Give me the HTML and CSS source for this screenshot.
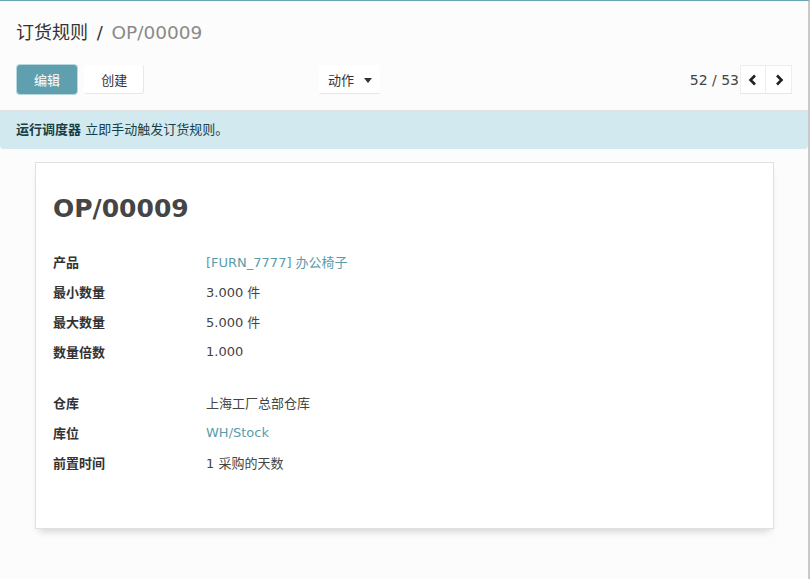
FILE: index.html
```html
<!DOCTYPE html>
<html lang="zh-CN">
<head>
    <meta charset="UTF-8">
    <title>订货规则 - OP/00009</title>
    <link rel="stylesheet" href="styles.css">
</head>
<body>

<div class="app">

    <!-- control panel -->
    <div class="cp">
        <div class="breadcrumb">
            <span class="bc-parent">订货规则</span>
            <span class="bc-sep">/</span>
            <span class="bc-current">OP/00009</span>
        </div>
        <div class="cp-bottom">
            <div class="cp-left">
                <div class="cp-buttons">
                    <button class="btn btn-primary">编辑</button>
                    <button class="btn btn-light">创建</button>
                </div>
                <div class="cp-sidebar">
                    <button class="btn btn-dropdown">动作 <span class="caret"></span></button>
                </div>
            </div>
            <div class="cp-right">
                <span class="pager-value">52 / 53</span>
                <div class="pager-btns">
                    <button class="btn btn-pager">
                        <svg width="10" height="12" viewBox="0 0 10 12"><path d="M7 1.5 L2.5 6 L7 10.5" fill="none" stroke="#222" stroke-width="2.6"/></svg>
                    </button>
                    <button class="btn btn-pager">
                        <svg width="10" height="12" viewBox="0 0 10 12"><path d="M3 1.5 L7.5 6 L3 10.5" fill="none" stroke="#222" stroke-width="2.6"/></svg>
                    </button>
                </div>
            </div>
        </div>
    </div>

    <!-- info bar -->
    <div class="alert">
        <b>运行调度器</b> 立即手动触发订货规则。
    </div>

    <!-- form sheet -->
    <div class="sheet">
        <h1 class="title">OP/00009</h1>

        <table class="fields">
            <tr><td class="label">产品</td><td><a href="#">[FURN_7777] 办公椅子</a></td></tr>
            <tr><td class="label">最小数量</td><td>3.000 件</td></tr>
            <tr><td class="label">最大数量</td><td>5.000 件</td></tr>
            <tr><td class="label">数量倍数</td><td>1.000</td></tr>
        </table>

        <table class="fields group2">
            <tr><td class="label">仓库</td><td>上海工厂总部仓库</td></tr>
            <tr><td class="label">库位</td><td><a href="#">WH/Stock</a></td></tr>
            <tr><td class="label">前置时间</td><td>1 采购的天数</td></tr>
        </table>
    </div>

</div>

</body>
</html>
```
FILE: styles.css
```css
html, body { margin: 0; padding: 0; }
body { font-family: "DejaVu Sans", "Noto Sans CJK SC", sans-serif; font-size: 13px; color: #454545; background: #fcfcfc; }
.app { min-height: 579px; box-sizing: border-box; border-top: 1px solid #6aa3b1; border-right: 2px solid #c9c9c9; }

/* control panel */
.cp { padding: 19px 16px 16px 16px; border-bottom: 1px solid #e2e2e2; }
.breadcrumb { font-size: 18px; line-height: 26px; color: #333; }
.bc-sep { margin: 0 3px; }
.bc-current { color: #8a8a8a; font-size: 18.5px; }
.cp-bottom { display: flex; margin-top: 19px; height: 29px; }
.cp-left { flex: 1; display: flex; justify-content: space-between; padding-right: 49px; }
.cp-right { flex: 1; display: flex; justify-content: flex-end; align-items: center; }

.btn { font-family: inherit; font-size: 13px; height: 29px; border: 1px solid transparent; border-radius: 3px; background: transparent; color: #333; cursor: pointer; padding: 0 16px; }
.btn-primary { background: #5f9fae; color: #fff; border-color: #5f9fae; box-shadow: 0 0 0 1px #b9d7de; margin-left: 1px; width: 60px; padding: 0; }
.btn-light { background: #fff; border-color: transparent #e8e8e8 #e8e8e8 transparent; width: 60px; padding: 0; margin-left: 3px; }
.btn-dropdown { width: 61px; padding: 0 0 0 2px; border-radius: 0; border-bottom-color: #e6e6e6; background: #fff; }
.caret { display: inline-block; margin-left: 6px; vertical-align: 2px; border-top: 5px solid #333; border-left: 4px solid transparent; border-right: 4px solid transparent; }

.pager-value { font-size: 14px; color: #444; margin-right: 1px; }
.pager-btns { display: flex; }
.btn-pager { width: 26px; padding: 0; border-radius: 0; border-color: #eee #eee #e6e6e6 #eee; background: #fff; display: flex; align-items: center; justify-content: center; }
.btn-pager + .btn-pager { border-left: none; }

/* info bar */
.alert { height: 38px; line-height: 38px; padding: 0 16px; background: #d2e9ef; color: #173f49; border-radius: 0 0 4px 4px; }
.alert b { font-weight: bold; }

/* sheet */
.sheet { margin: 13px 34px 24px 35px; height: 367px; box-sizing: border-box; padding: 31px 17px 0 17px; background: #fff; border: 1px solid #e0e0e0; box-shadow: 0 6px 8px -4px rgba(0,0,0,0.18); }
.title { margin: 0 0 22px 0; font-size: 25px; line-height: 30px; font-weight: bold; color: #454545; }
.fields { border-collapse: collapse; }
.fields td { height: 30px; padding: 0; color: #444; }
.fields td.label { width: 153px; font-weight: bold; color: #333; }
.fields a { color: #5c9bab; text-decoration: none; }
.group2 { margin-top: 21px; }
```
